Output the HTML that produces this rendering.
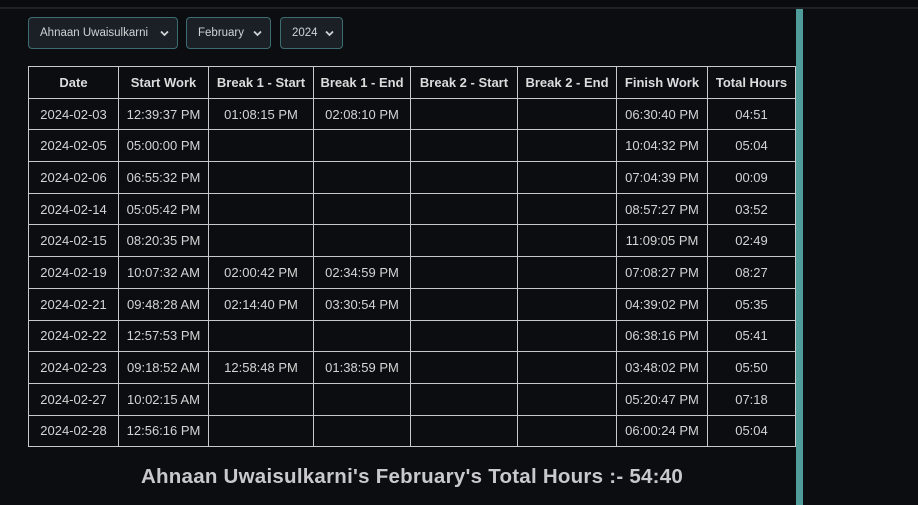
<!DOCTYPE html>
<html><head><meta charset="utf-8"><style>
*{box-sizing:border-box;margin:0;padding:0}
body{width:918px;height:505px;background:#0c0d11;font-family:"Liberation Sans",sans-serif;color:#d8d8d8;position:relative;overflow:hidden}
.top{position:absolute;left:0;top:0;width:918px;height:9px;background:#0a0b0e;border-bottom:2px solid #1f2126}
.teal{position:absolute;left:796px;top:9px;width:7px;height:496px;background:#4f9c9a}
.sel{position:absolute;top:17px;height:32px;border:1px solid #3d6d70;border-radius:4px;background:#1a2026;font-size:11.5px;color:#cfd3d6;line-height:30px;padding-left:11px}
.sel svg{position:absolute;right:8px;top:12px}
table{position:absolute;left:28px;top:66px;border-collapse:collapse;table-layout:fixed;width:767px}
td,th{border:1px solid #c9c9c9;text-align:center;font-size:13px;height:31.7px;padding:0}
th{font-weight:bold;font-size:13px;color:#dcdcdc}
td{color:#d4d4d4}
.title{position:absolute;left:0;width:824px;top:465px;text-align:center;font-weight:bold;font-size:20.5px;letter-spacing:0.25px;color:#c9c9cc}
</style></head><body>
<div class="top"></div>
<div class="teal"></div>
<div class="sel" style="left:28px;width:150px">Ahnaan Uwaisulkarni<svg width="9" height="7" viewBox="0 0 9 7"><path d="M1 1.5 L4.5 5 L8 1.5" stroke="#cfd3d6" stroke-width="1.8" fill="none"/></svg></div>
<div class="sel" style="left:186px;width:85px">February<svg width="9" height="7" viewBox="0 0 9 7"><path d="M1 1.5 L4.5 5 L8 1.5" stroke="#cfd3d6" stroke-width="1.8" fill="none"/></svg></div>
<div class="sel" style="left:280px;width:63px">2024<svg width="9" height="7" viewBox="0 0 9 7"><path d="M1 1.5 L4.5 5 L8 1.5" stroke="#cfd3d6" stroke-width="1.8" fill="none"/></svg></div>
<table>
<colgroup><col style="width:90px"><col style="width:90px"><col style="width:105px"><col style="width:97px"><col style="width:107px"><col style="width:99px"><col style="width:91px"><col style="width:88px"></colgroup>
<tr><th>Date</th><th>Start Work</th><th>Break 1 - Start</th><th>Break 1 - End</th><th>Break 2 - Start</th><th>Break 2 - End</th><th>Finish Work</th><th>Total Hours</th></tr>
<tr><td>2024-02-03</td><td>12:39:37 PM</td><td>01:08:15 PM</td><td>02:08:10 PM</td><td></td><td></td><td>06:30:40 PM</td><td>04:51</td></tr>
<tr><td>2024-02-05</td><td>05:00:00 PM</td><td></td><td></td><td></td><td></td><td>10:04:32 PM</td><td>05:04</td></tr>
<tr><td>2024-02-06</td><td>06:55:32 PM</td><td></td><td></td><td></td><td></td><td>07:04:39 PM</td><td>00:09</td></tr>
<tr><td>2024-02-14</td><td>05:05:42 PM</td><td></td><td></td><td></td><td></td><td>08:57:27 PM</td><td>03:52</td></tr>
<tr><td>2024-02-15</td><td>08:20:35 PM</td><td></td><td></td><td></td><td></td><td>11:09:05 PM</td><td>02:49</td></tr>
<tr><td>2024-02-19</td><td>10:07:32 AM</td><td>02:00:42 PM</td><td>02:34:59 PM</td><td></td><td></td><td>07:08:27 PM</td><td>08:27</td></tr>
<tr><td>2024-02-21</td><td>09:48:28 AM</td><td>02:14:40 PM</td><td>03:30:54 PM</td><td></td><td></td><td>04:39:02 PM</td><td>05:35</td></tr>
<tr><td>2024-02-22</td><td>12:57:53 PM</td><td></td><td></td><td></td><td></td><td>06:38:16 PM</td><td>05:41</td></tr>
<tr><td>2024-02-23</td><td>09:18:52 AM</td><td>12:58:48 PM</td><td>01:38:59 PM</td><td></td><td></td><td>03:48:02 PM</td><td>05:50</td></tr>
<tr><td>2024-02-27</td><td>10:02:15 AM</td><td></td><td></td><td></td><td></td><td>05:20:47 PM</td><td>07:18</td></tr>
<tr><td>2024-02-28</td><td>12:56:16 PM</td><td></td><td></td><td></td><td></td><td>06:00:24 PM</td><td>05:04</td></tr>
</table>
<div class="title">Ahnaan Uwaisulkarni's February's Total Hours :- 54:40</div>
</body></html>
